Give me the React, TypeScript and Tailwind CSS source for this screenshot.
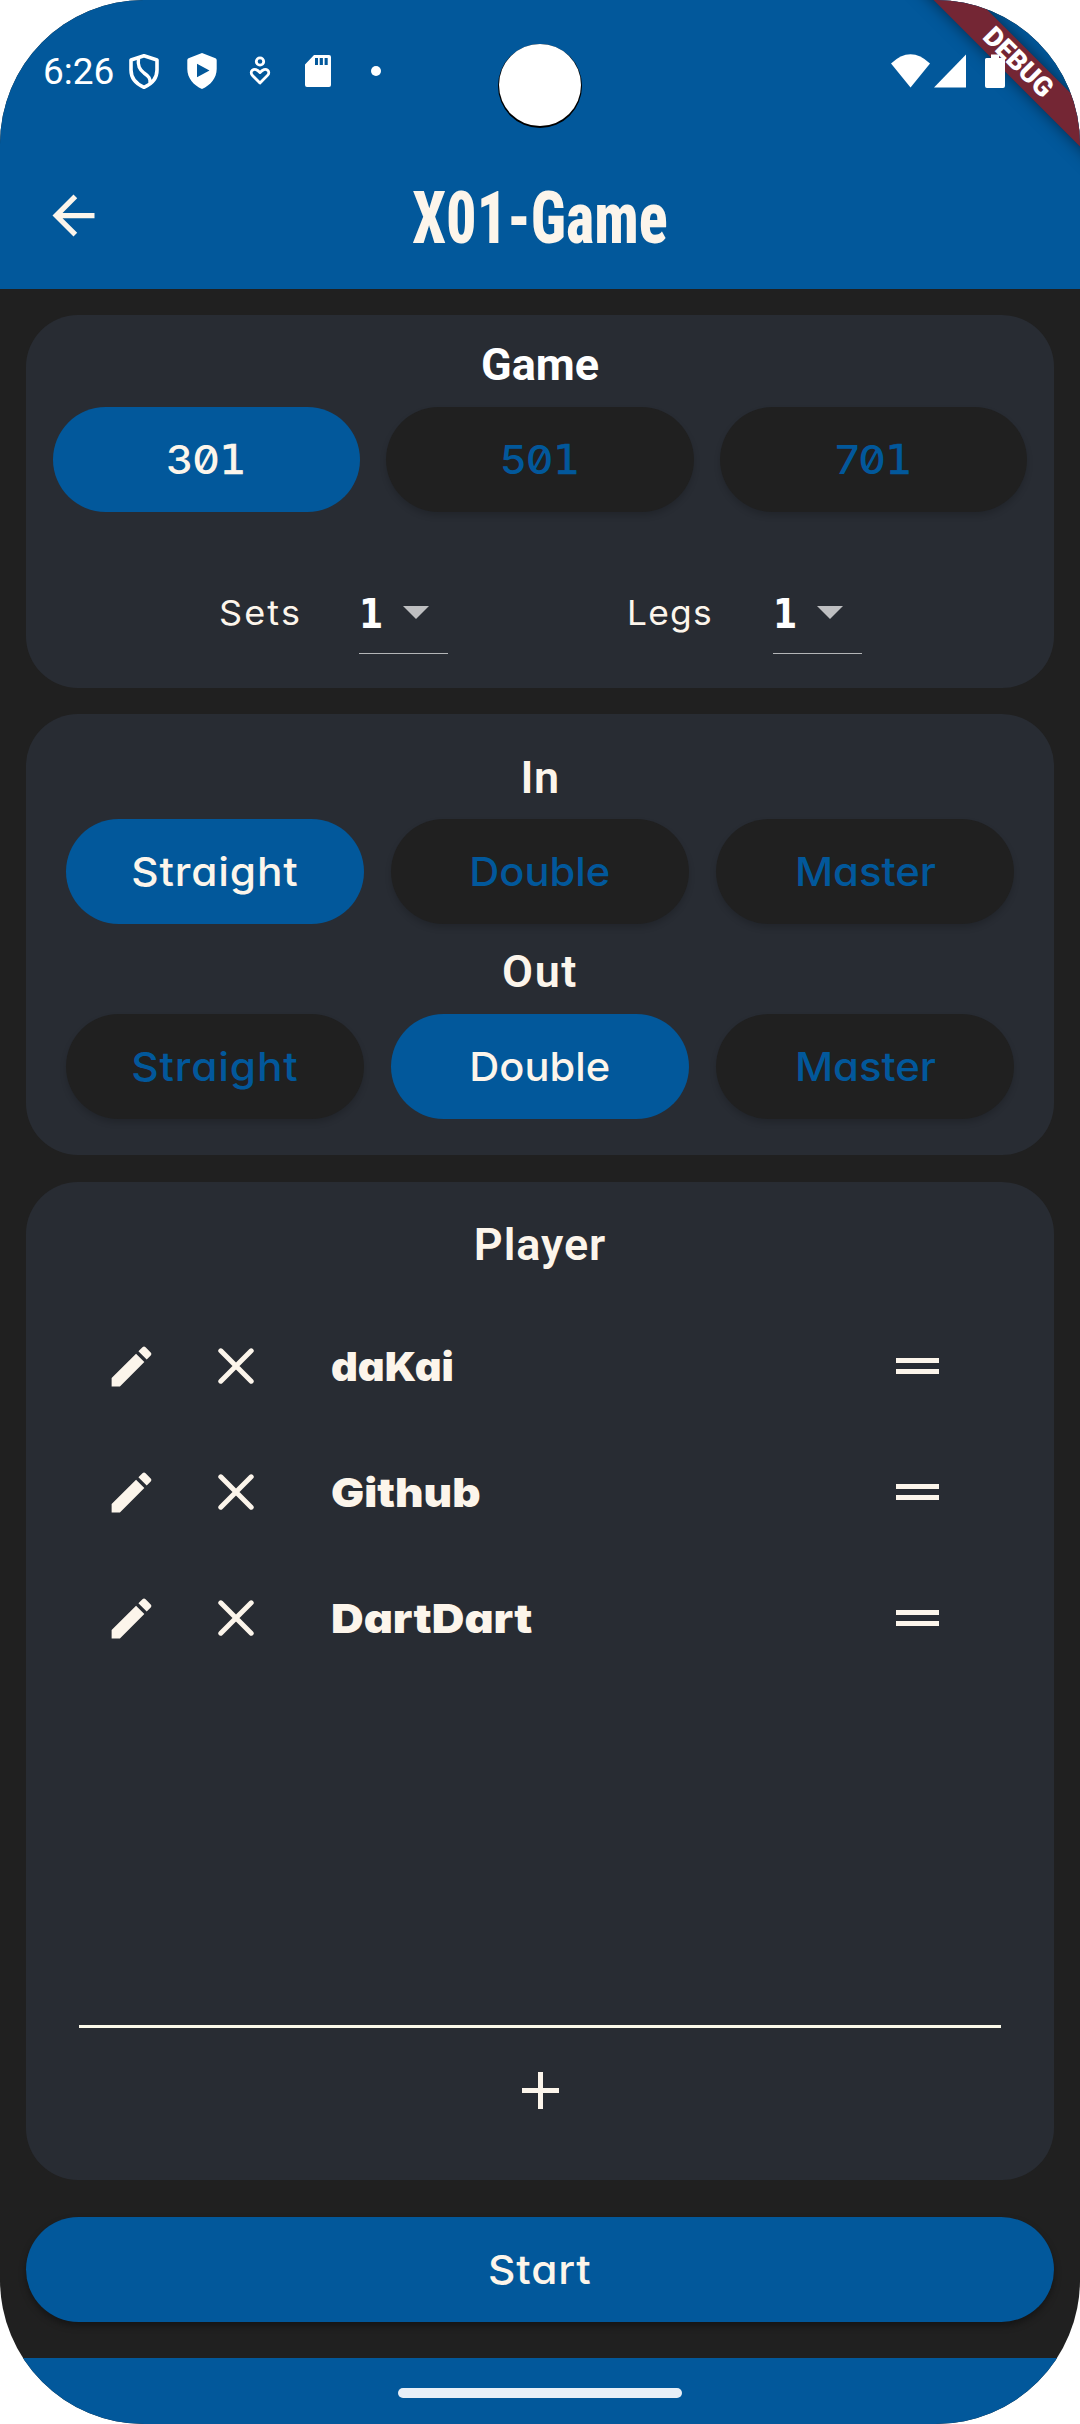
import React from "react";
import { MdArrowBack, MdEdit } from "react-icons/md";

const players = [
  { name: "daKai", stretch: "scale-x-[1.04]" },
  { name: "Github", stretch: "scale-x-[1.1]" },
  { name: "DartDart", stretch: "scale-x-[1.13]" },
];

function StatusSlot({ children }: { children: React.ReactNode }) {
  return (
    <div className="flex w-[58px] justify-center">
      <svg viewBox="0 0 40 40" className="h-10 w-10" fill="none">
        {children}
      </svg>
    </div>
  );
}

function StatusBar() {
  return (
    <div className="relative z-20 flex h-[142px] items-center">
      <span className="w-[115px] pl-[43px] font-[Roboto] text-[37px] leading-none text-white">6:26</span>
      <StatusSlot>
        <path d="M20 4.700 33 9V19C33 28 26.500 33.500 20 36.300 13.500 33.500 7 28 7 19V9Z" stroke="#fff" strokeWidth="3.600" strokeLinejoin="round" />
        <path d="M14.500 7C13.500 15 15.500 18.500 20 22 25 25.500 26.500 27.500 26 32" stroke="#fff" strokeWidth="3.400" />
      </StatusSlot>
      <StatusSlot>
        <path
          d="M20 2 33.500 7.200Q34.700 7.800 34.700 9.200V18C34.700 27 28.500 34.500 20 37.900 11.500 34.500 5.300 27 5.300 18V9.200Q5.300 7.800 6.500 7.200ZM15 12.700V26.300L27.500 19.500Z"
          fill="#fff"
          fillRule="evenodd"
        />
      </StatusSlot>
      <StatusSlot>
        <circle cx="20" cy="10.500" r="3.700" stroke="#fff" strokeWidth="2.800" />
        <path d="M20 32 12.500 24.400C10.800 22.600 10.900 20.600 12.300 19.300 14.500 17.500 17.500 18.500 20 21.600 22.500 18.500 25.500 17.500 27.700 19.300 29.100 20.600 29.200 22.600 27.500 24.400Z" stroke="#fff" strokeWidth="2.800" strokeLinejoin="round" />
      </StatusSlot>
      <StatusSlot>
        <path d="M16 4H31Q33 4 33 6V34Q33 36 31 36H9Q7 36 7 34V13.500ZM17 7V14H20V7ZM21.700 7V14H24.900V7ZM26.600 7V14H29.700V7Z" fill="#fff" fillRule="evenodd" />
      </StatusSlot>
      <StatusSlot>
        <circle cx="20" cy="20" r="5" fill="#fff" />
      </StatusSlot>
      <div className="ml-auto flex pr-[75px]">
        <svg viewBox="0 0 39 34" className="mr-1 h-[34px] w-[39px]" fill="#fff">
          <path d="M0 9.500Q19.500-9 39 9.500L19.500 33.500Z" />
        </svg>
        <svg viewBox="0 0 32 34" className="mr-[19px] h-[34px] w-8" fill="#fff">
          <path d="M32 .5V33.500H0Z" />
        </svg>
        <svg viewBox="0 0 20 34" className="h-[34px] w-5" fill="#fff">
          <path d="M6 .5H14V4H18.500Q20 4 20 5.500V32Q20 34 18 34H2Q0 34 0 32V5.500Q0 4 1.500 4H6Z" />
        </svg>
      </div>
    </div>
  );
}

function Heading({ children, className }: { children: string; className: string }) {
  return (
    <h2 className={`flex items-center justify-center font-[Roboto] text-[45px] leading-none ${className}`}>
      {children}
    </h2>
  );
}

function Pill({ active, children, label = "" }: { active?: boolean; children: React.ReactNode; label?: string }) {
  return (
    <button
      className={`flex h-[105px] flex-1 items-center justify-center rounded-full font-[Inter] text-[40px] leading-none font-medium ${
        active ? "bg-[#02589b] text-[#fcf5eb]" : "bg-[#202020] text-[#02589b] shadow-[0_4px_6px_rgba(0,0,0,0.16)]"
      }`}
    >
      <span className={`inline-block ${label}`}>{children}</span>
    </button>
  );
}

/* Score label: slashed zero and a footed one. */
function Score({ lead }: { lead: string }) {
  return (
    <span className="inline-block scale-x-[1.05] [font-feature-settings:'zero']">
      {lead}
      <span className="font-['DejaVu_Sans'] [-webkit-text-stroke:0.7px_currentColor]">1</span>
    </span>
  );
}

function CheckoutRow({ selected }: { selected: string }) {
  return (
    <div className="flex gap-[27px] px-10 [font-feature-settings:'cv11']">
      <Pill active={selected === "Straight"} label="scale-x-[1.06] tracking-[0.8px]">Straight</Pill>
      <Pill active={selected === "Double"} label="scale-x-[1.04]">Double</Pill>
      <Pill active={selected === "Master"} label="scale-x-[1.045]">Master</Pill>
    </div>
  );
}

function Dropdown() {
  return (
    <div className="flex h-[82px] w-[89px] items-center border-b border-[#b4b6b8]">
      <span className="w-[44px] pt-[2px] font-['DejaVu_Sans'] text-[40px] leading-none font-bold text-white">
        <span className="inline-block origin-left scale-x-[0.87]">1</span>
      </span>
      <svg viewBox="0 0 26 13" className="h-[13px] w-[26px]" fill="#bebfc1">
        <path d="M0 0H26L13 13Z" />
      </svg>
    </div>
  );
}

function PlayerRow({ name, stretch }: { name: string; stretch: string }) {
  return (
    <li className="flex h-[126px] items-center pr-[115px] pl-[79px]">
      <MdEdit className="h-[53px] w-[53px]" />
      <svg viewBox="0 0 36 36" className="ml-[60px] h-9 w-9" fill="none" stroke="currentColor" strokeWidth="5" strokeLinecap="round">
        <path d="M2.800 2.800 33.200 33.200M33.200 2.800 2.800 33.200" />
      </svg>
      <span className={`ml-[77px] origin-left pt-[2px] font-[Inter] text-[40px] leading-none font-black [font-feature-settings:'cv11'] ${stretch}`}>
        {name}
      </span>
      <span className="ml-auto flex h-4 w-[43px] flex-col justify-between">
        <span className="h-[5px] bg-current" />
        <span className="h-[5px] bg-current" />
      </span>
    </li>
  );
}

function DebugBanner() {
  return (
    <div className="absolute top-[47px] left-[868px] z-10 flex h-[31px] w-[300px] rotate-45 items-center justify-center bg-[#742634] font-[Roboto] text-[27px] leading-none font-black text-white shadow-[0_0_16px_rgba(0,0,0,0.5)]">
      DEBUG
    </div>
  );
}

export default function App() {
  return (
    <div className="relative flex h-[2424px] w-[1080px] flex-col overflow-hidden rounded-[144px] bg-[#202020] text-[#fcf5eb]">
      <header className="h-[289px] bg-[#02589b]">
        <StatusBar />
        <div className="grid h-[147px] grid-cols-[200px_1fr_200px] items-center">
          <MdArrowBack className="ml-[42px] h-[63px] w-[63px]" />
          <h1 className="scale-x-[0.835] pt-[6px] text-center font-[Roboto] text-[72px] leading-none font-extrabold [font-stretch:75%]">
            X01-Game
          </h1>
        </div>
      </header>

      <main className="flex flex-1 flex-col px-[26px] pt-[26px]">
        <section className="h-[373px] rounded-[52px] bg-[#282c33]">
          <Heading className="h-[92px] pt-[7px] font-bold text-white">Game</Heading>
          <div className="flex gap-[26px] px-[27px]">
            <Pill active><Score lead="30" /></Pill>
            <Pill><Score lead="50" /></Pill>
            <Pill><Score lead="70" /></Pill>
          </div>
          <div className="mt-[60px] flex items-center pl-[193px] font-[Inter] text-[34px] leading-none">
            <span className="w-[140px]">
              <span className="inline-block origin-left scale-x-[1.06] tracking-[2px]">Sets</span>
            </span>
            <Dropdown />
            <span className="ml-[179px] w-[146px]">
              <span className="inline-block origin-left scale-x-[1.04] tracking-[1.2px]">Legs</span>
            </span>
            <Dropdown />
          </div>
        </section>

        <section className="mt-[26px] h-[441px] rounded-[52px] bg-[#282c33]">
          <Heading className="h-[105px] pt-[21px] font-semibold tracking-[0.5px]">In</Heading>
          <CheckoutRow selected="Straight" />
          <Heading className="h-[90px] pt-[4px] font-semibold tracking-[1.5px]">Out</Heading>
          <CheckoutRow selected="Double" />
        </section>

        <section className="mt-[27px] flex h-[998px] flex-col rounded-[52px] bg-[#282c33]">
          <Heading className="h-[121px] pt-[3px] font-semibold tracking-[0.9px]">Player</Heading>
          <ul className="flex-1">
            {players.map((p) => (
              <PlayerRow key={p.name} {...p} />
            ))}
          </ul>
          <div className="mx-[53px] h-[3px] bg-[#fbfaea]" />
          <button className="flex h-[152px] justify-center pt-[44px]">
            <svg viewBox="0 0 37 37" className="h-[37px] w-[37px]" fill="none" stroke="currentColor" strokeWidth="5">
              <path d="M18.500 0V37M0 18.500H37" />
            </svg>
          </button>
        </section>

        <button className="mt-[37px] flex h-[105px] items-center justify-center rounded-full bg-[#02589b] font-[Inter] text-[40px] leading-none font-medium shadow-[0_4px_7px_rgba(0,0,0,0.35)] [font-feature-settings:'cv11']">
          <span className="inline-block scale-x-[1.06] tracking-[0.8px]">Start</span>
        </button>
      </main>

      <footer className="flex h-[66px] justify-center bg-[#02589b] pt-[30px]">
        <div className="h-[10px] w-[284px] rounded-full bg-[#e8eff7]" />
      </footer>

      <div className="absolute top-[44px] left-[498px] h-[84px] w-[84px] rounded-full bg-black">
        <div className="ml-px h-[82px] w-[82px] rounded-full bg-white" />
      </div>
      <DebugBanner />
    </div>
  );
}
